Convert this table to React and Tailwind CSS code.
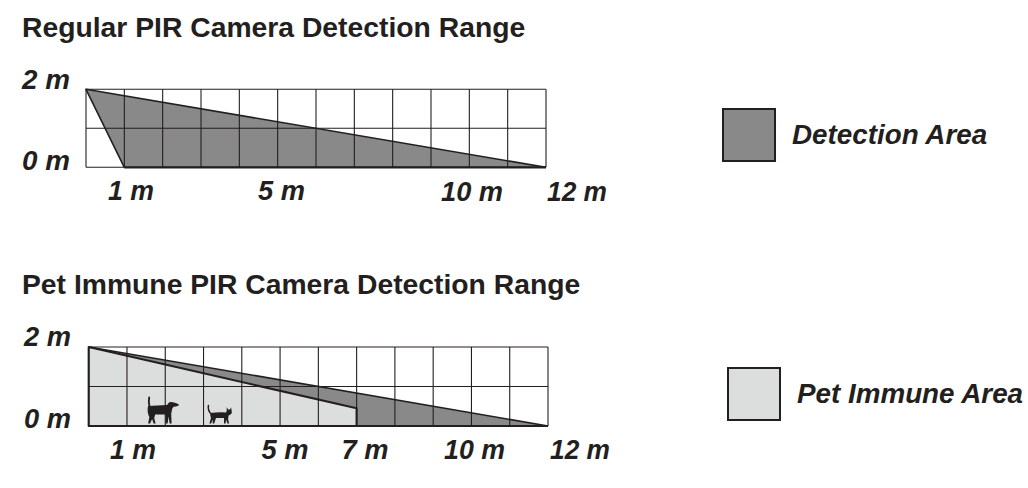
const INK = "#231f20";
const DARK = "#898989";
const LIGHT = "#dcdddd";

// grid of 12 x 2 cells drawn over the fills
const Grid = ({ x0, x1, yt, yb }) => {
  const cw = (x1 - x0) / 12;
  const ym = (yt + yb) / 2;
  return (
    <g stroke={INK} strokeWidth="1.1">
      {Array.from({ length: 13 }).map((_, i) => (
        <line key={i} x1={x0 + i * cw} y1={yt} x2={x0 + i * cw} y2={yb} />
      ))}
      <line x1={x0} y1={yt} x2={x1} y2={yt} />
      <line x1={x0} y1={ym} x2={x1} y2={ym} />
      <line x1={x0} y1={yb} x2={x1} y2={yb} />
    </g>
  );
};

const Label = ({ x, y, w, children }) => (
  <text
    x={x}
    y={y}
    textLength={w}
    lengthAdjust="spacingAndGlyphs"
    fontSize="27"
    fontWeight="bold"
    fontStyle="italic"
    fill={INK}
    fontFamily="Liberation Sans, Arial, sans-serif"
  >
    {children}
  </text>
);

const Title = ({ children }) => (
  <div className="pt-[13px] pl-[22px] h-[35px]">
    <h2 className="text-[28.3px] leading-[28px] font-bold whitespace-nowrap">{children}</h2>
  </div>
);

const Legend = ({ className, fill, label }) => (
  <div className={`flex items-center ${className}`}>
    <div className="w-[54px] h-[54px] border-2 border-[#231f20]" style={{ background: fill }} />
    <div className="ml-[16px] text-[27.8px] font-bold italic leading-none whitespace-nowrap">{label}</div>
  </div>
);

const RegularChart = () => (
  <svg width="620" height="175" viewBox="0 35 620 175" className="block shrink-0">
    <polygon points="86,89.3 124.3,167.3 546,167.3" fill={DARK} />
    <Grid x0={86} x1={546} yt={89.3} yb={167.3} />
    <g stroke={INK} fill="none" strokeLinejoin="round">
      <polyline points="124.3,167.3 86,89.3 546,167.3" strokeWidth="1.6" />
      <line x1="124.3" y1="167.3" x2="546" y2="167.3" strokeWidth="2.2" />
    </g>
    <Label x={22} y={88.5} w={48}>2 m</Label>
    <Label x={22} y={170} w={48}>0 m</Label>
    <Label x={108} y={200} w={46}>1 m</Label>
    <Label x={258} y={200} w={47}>5 m</Label>
    <Label x={441} y={200.5} w={62}>10 m</Label>
    <Label x={547} y={200.5} w={60}>12 m</Label>
  </svg>
);

const Dog = () => (
  <g fill={INK}>
    <path d="M149.6,407 Q148.2,402 149.2,397.4" stroke={INK} strokeWidth="1.9" strokeLinecap="round" fill="none" />
    <path d="M148,406 L167,405 L169,402.5 Q171,401.4 174,402.4 L177,403.4 Q179.3,404 178.8,405.6 L176,406.4 L173.6,406.8 L172.2,408.8 L171.2,414 L171.6,423.5 L169.6,423.5 L168.6,416.5 L167.6,423.5 L165.6,423.5 L165.4,414.6 L155.2,414.6 L154.2,418 L155.6,423.5 L153.6,423.5 L152.1,419 L150.1,423.5 L148.1,423.5 L149.4,417 Q146.8,412.6 148,406 Z" />
    <ellipse cx="170.4" cy="405.6" rx="1.6" ry="3.2" />
  </g>
);

const Cat = () => (
  <g fill={INK}>
    <path d="M211.5,414 Q207.6,411 208.4,405.4" stroke={INK} strokeWidth="1.5" strokeLinecap="round" fill="none" />
    <path d="M210.5,413 Q218,411.8 226,412.4 L226.8,410.4 L226.6,407.3 L228.2,409.4 L230,409.4 L231.1,407.3 L231.6,410.6 Q232.6,413 230.5,414.5 L228.6,415.5 L228.1,419 L229.1,423.5 L227.5,423.5 L226,419.6 L225.6,423.5 L224,423.5 L224,418 L216,418 L214.2,423.5 L212.6,423.5 L213,419.4 L211,423.5 L209.4,423.5 L211,418 Q209.4,415.4 210.5,413 Z" />
  </g>
);

const PetChart = () => (
  <svg width="620" height="175" viewBox="0 292 620 175" className="block shrink-0">
    <polygon points="88.7,347 548,426 356.6,426 356.6,408.3" fill={DARK} />
    <polygon points="88.7,347 356.6,408.3 356.6,426 88.7,426" fill={LIGHT} />
    <Grid x0={88.7} x1={548} yt={347} yb={426} />
    <g stroke={INK} fill="none" strokeLinejoin="round">
      <line x1="88.7" y1="347" x2="548" y2="426" strokeWidth="1.6" />
      <polygon points="88.7,347 356.6,408.3 356.6,426 88.7,426" strokeWidth="2.1" />
      <line x1="356.6" y1="426" x2="548" y2="426" strokeWidth="2" />
    </g>
    <Dog />
    <Cat />
    <Label x={24} y={346} w={47}>2 m</Label>
    <Label x={24} y={428.3} w={47}>0 m</Label>
    <Label x={110} y={459.3} w={46}>1 m</Label>
    <Label x={261.5} y={459.3} w={47}>5 m</Label>
    <Label x={341.5} y={459.3} w={47}>7 m</Label>
    <Label x={444} y={459.3} w={61}>10 m</Label>
    <Label x={550} y={459.3} w={60}>12 m</Label>
  </svg>
);

export default function App() {
  return (
    <div className="w-[1028px] h-[488px] bg-white overflow-hidden text-[#231f20] font-['Liberation_Sans',Arial,sans-serif]">
      {/* Regular */}
      <section className="h-[257px]">
        <Title>Regular PIR Camera Detection Range</Title>
        <div className="flex items-start">
          <RegularChart />
          <Legend className="ml-[102px] mt-[73px]" fill={DARK} label="Detection Area" />
        </div>
      </section>

      {/* Pet immune */}
      <section>
        <Title>Pet Immune PIR Camera Detection Range</Title>
        <div className="flex items-start">
          <PetChart />
          <Legend className="ml-[107px] mt-[75px]" fill={LIGHT} label="Pet Immune Area" />
        </div>
      </section>
    </div>
  );
}
